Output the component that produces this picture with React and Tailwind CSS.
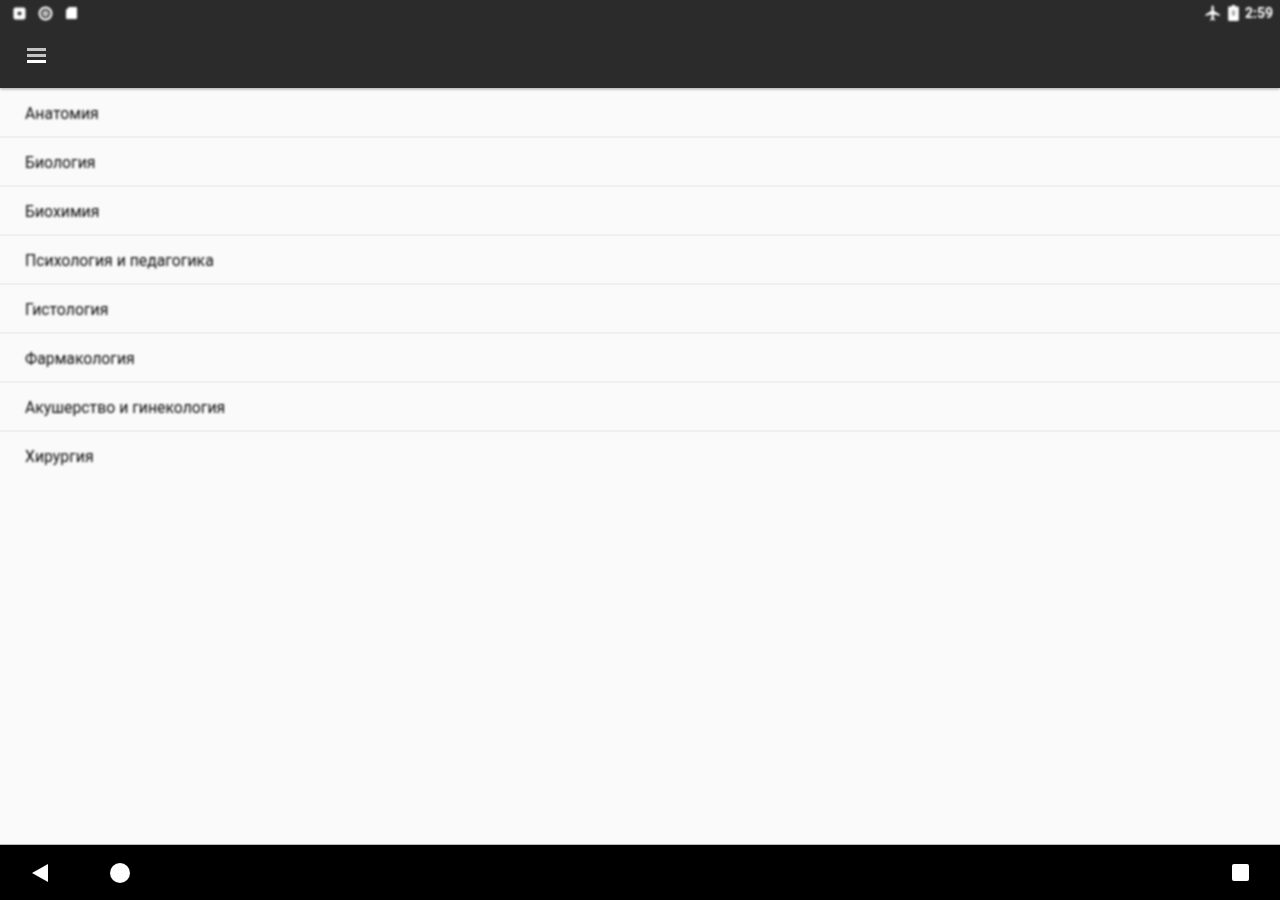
const subjects = [
  "Анатомия",
  "Биология",
  "Биохимия",
  "Психология и педагогика",
  "Гистология",
  "Фармакология",
  "Акушерство и гинекология",
  "Хирургия",
];

const App = () => {
  return (
    <div className="h-[900px] w-[1280px] flex flex-col overflow-hidden bg-[#fafafa] font-['Roboto',sans-serif]">
      {/* Status bar + toolbar */}
      <header className="h-[88px] bg-[#2b2b2b] shadow-[0_1px_3px_rgba(0,0,0,0.35)] z-10 shrink-0">
        <div className="h-[26px] flex items-center justify-between pl-[13px] pr-[7px] text-white blur-[0.8px]">
          <div className="flex items-center gap-[12px]">
            <svg width="13" height="13" viewBox="0 0 13 13">
              <rect x="0.5" y="0.5" width="12" height="12" rx="2" fill="#ffffff" />
              <circle cx="6.5" cy="6.5" r="2" fill="#333" />
            </svg>
            <svg width="15" height="15" viewBox="0 0 14 14">
              <circle cx="7" cy="7" r="5.5" fill="none" stroke="#ffffff" strokeWidth="2" />
              <circle cx="7" cy="7" r="3" fill="#bbb" />
            </svg>
            <svg width="13" height="14" viewBox="0 0 13 14">
              <path d="M4 1h7a1 1 0 0 1 1 1v10a1 1 0 0 1-1 1H2a1 1 0 0 1-1-1V4z" fill="#ffffff" />
            </svg>
          </div>
          <div className="flex items-center gap-[6px]">
            <svg width="18" height="18" viewBox="0 0 24 24" fill="#ffffff">
              <path d="M21 16v-2l-8-5V3.500a1.500 1.500 0 0 0-3 0V9l-8 5v2l8-2.500V19l-2 1.500V22l3.500-1 3.500 1v-1.500L13 19v-5.500z" />
            </svg>
            <svg width="11" height="16" viewBox="0 0 10 15">
              <path d="M3.500 0h3v1.500H9a1 1 0 0 1 1 1V14a1 1 0 0 1-1 1H1a1 1 0 0 1-1-1V2.500a1 1 0 0 1 1-1h2.500z" fill="#ffffff" />
              <rect x="3.500" y="5" width="3" height="5" fill="#aaa" />
            </svg>
            <span className="text-[14px] leading-none font-bold text-white">2:59</span>
          </div>
        </div>
        <div className="h-[62px] flex items-start pt-[22px] pl-[27px]">
          <div className="w-[19px] flex flex-col gap-[3px] blur-[0.5px]">
            <div className="h-[3px] bg-[#c4c4c4]" />
            <div className="h-[3px] bg-[#c4c4c4]" />
            <div className="h-[3px] bg-white" />
          </div>
        </div>
      </header>

      {/* Subject list */}
      <main className="flex-1">
        <ul className="pt-px">
          {subjects.map((name, index) => (
            <li
              key={name}
              className={`h-[49px] flex items-center pl-[25px] pt-[2px] text-[15.8px] text-[#0a0a0a] border-b-2 ${
                index < subjects.length - 1 ? "border-[#f0f0f0]" : "border-transparent"
              }`}
            >
              <span className="blur-[0.8px]">{name}</span>
            </li>
          ))}
        </ul>
      </main>

      {/* Navigation bar */}
      <footer className="h-[56px] bg-black border-t border-[#bbbbbb] flex items-center justify-between pl-[31px] pr-[31px] shrink-0">
        <div className="flex items-center gap-[61px] blur-[0.5px]">
          <svg width="18" height="20" viewBox="0 0 18 20">
            <path d="M1 10 17 1v18z" fill="#fff" />
          </svg>
          <div className="w-[20px] h-[20px] rounded-full bg-white" />
        </div>
        <div className="w-[17px] h-[17px] rounded-[2px] bg-white blur-[0.5px]" />
      </footer>
    </div>
  );
};

export default App;
